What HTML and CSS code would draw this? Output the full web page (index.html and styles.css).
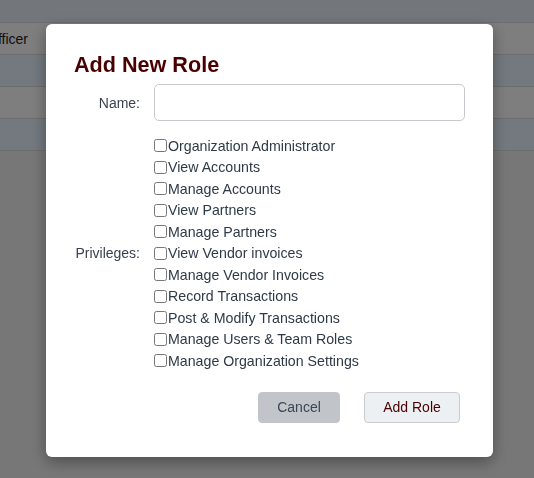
FILE: index.html
```html
<!DOCTYPE html>
<html lang="en">
<head>
<meta charset="utf-8">
<title>Roles</title>
<link rel="stylesheet" href="styles.css">
</head>
<body>
  <div class="page">
    <div class="table-head"></div>
    <div class="table-row"><span class="cell">Officer</span></div>
    <div class="table-row alt"></div>
    <div class="table-row"></div>
    <div class="table-row alt"></div>
  </div>

  <div class="overlay">
    <form class="modal">
      <h2 class="modal-title">Add New Role</h2>
      <div class="field">
        <label class="field-label" for="role-name">Name:</label>
        <input class="text-input" id="role-name" type="text">
      </div>
      <div class="field privileges">
        <span class="field-label">Privileges:</span>
        <div class="checks">
          <label class="check"><input type="checkbox">Organization Administrator</label>
          <label class="check"><input type="checkbox">View Accounts</label>
          <label class="check"><input type="checkbox">Manage Accounts</label>
          <label class="check"><input type="checkbox">View Partners</label>
          <label class="check"><input type="checkbox">Manage Partners</label>
          <label class="check"><input type="checkbox">View Vendor invoices</label>
          <label class="check"><input type="checkbox">Manage Vendor Invoices</label>
          <label class="check"><input type="checkbox">Record Transactions</label>
          <label class="check"><input type="checkbox">Post &amp; Modify Transactions</label>
          <label class="check"><input type="checkbox">Manage Users &amp; Team Roles</label>
          <label class="check"><input type="checkbox">Manage Organization Settings</label>
        </div>
      </div>
      <div class="actions">
        <button type="button" class="btn btn-cancel">Cancel</button>
        <button type="button" class="btn btn-primary">Add Role</button>
      </div>
    </form>
  </div>
</body>
</html>
```

FILE: styles.css
```css
* { box-sizing: border-box; }

html, body {
  margin: 0;
  height: 100%;
}

body {
  font-family: "Liberation Sans", Arial, sans-serif;
  font-size: 14px;
  color: #333;
  background: #eeeeee;
  overflow: hidden;
}

/* table behind the dialog */
.page {
  display: flex;
  flex-direction: column;
}

.table-head {
  height: 23px;
  background: #e6eef6;
  border-bottom: 1px solid #d8dde2;
}

.table-row {
  height: 32px;
  background: #fcfcfc;
  border-bottom: 1px solid #dadada;
  display: flex;
  align-items: center;
}

.table-row.alt {
  background: #e6f2fe;
}

.cell {
  margin-left: -13px;
  font-size: 14px;
  color: #222;
}

/* dimmed backdrop with the dialog on top */
.overlay {
  position: fixed;
  inset: 0;
  background: rgba(0, 0, 0, 0.5);
  display: flex;
  justify-content: flex-start;
  align-items: flex-start;
  padding: 24px 0 0 46px;
}

.modal {
  width: 447px;
  height: 433px;
  background: #fff;
  border-radius: 6px;
  box-shadow: 0 5px 15px rgba(0, 0, 0, 0.35);
  padding: 28px 28px 0 28px;
  display: flex;
  flex-direction: column;
}

.modal-title {
  margin: 0 0 6px 0;
  font-size: 21.6px;
  font-weight: bold;
  color: #4a0000;
  line-height: 26px;
}

.field {
  display: grid;
  grid-template-columns: 66px 1fr;
  column-gap: 14px;
  align-items: center;
}

.field-label {
  text-align: right;
  color: #3a4250;
  font-size: 14px;
}

.text-input {
  height: 37px;
  border: 1px solid #c6c9cd;
  border-radius: 5px;
  font: inherit;
  padding: 0 10px;
  outline: none;
}

.privileges {
  margin-top: 14px;
}

.checks {
  display: flex;
  flex-direction: column;
}

.check {
  display: flex;
  align-items: center;
  height: 21.5px;
  color: #2f3a48;
  font-size: 14.2px;
  white-space: nowrap;
}

.check input {
  width: 13px;
  height: 13px;
  margin: 0 1px 0 0;
}

.actions {
  display: flex;
  justify-content: flex-end;
  gap: 24px;
  padding-right: 5px;
  margin-top: 20px;
}

.btn {
  height: 31px;
  border-radius: 4px;
  font-family: inherit;
  font-size: 14px;
  cursor: pointer;
}

.btn-cancel {
  width: 82px;
  background: #c1c5c9;
  border: 1px solid #c1c5c9;
  color: #3a4656;
}

.btn-primary {
  width: 96px;
  background: #edf0f2;
  border: 1px solid #c9ccd0;
  color: #4a0000;
}
```
